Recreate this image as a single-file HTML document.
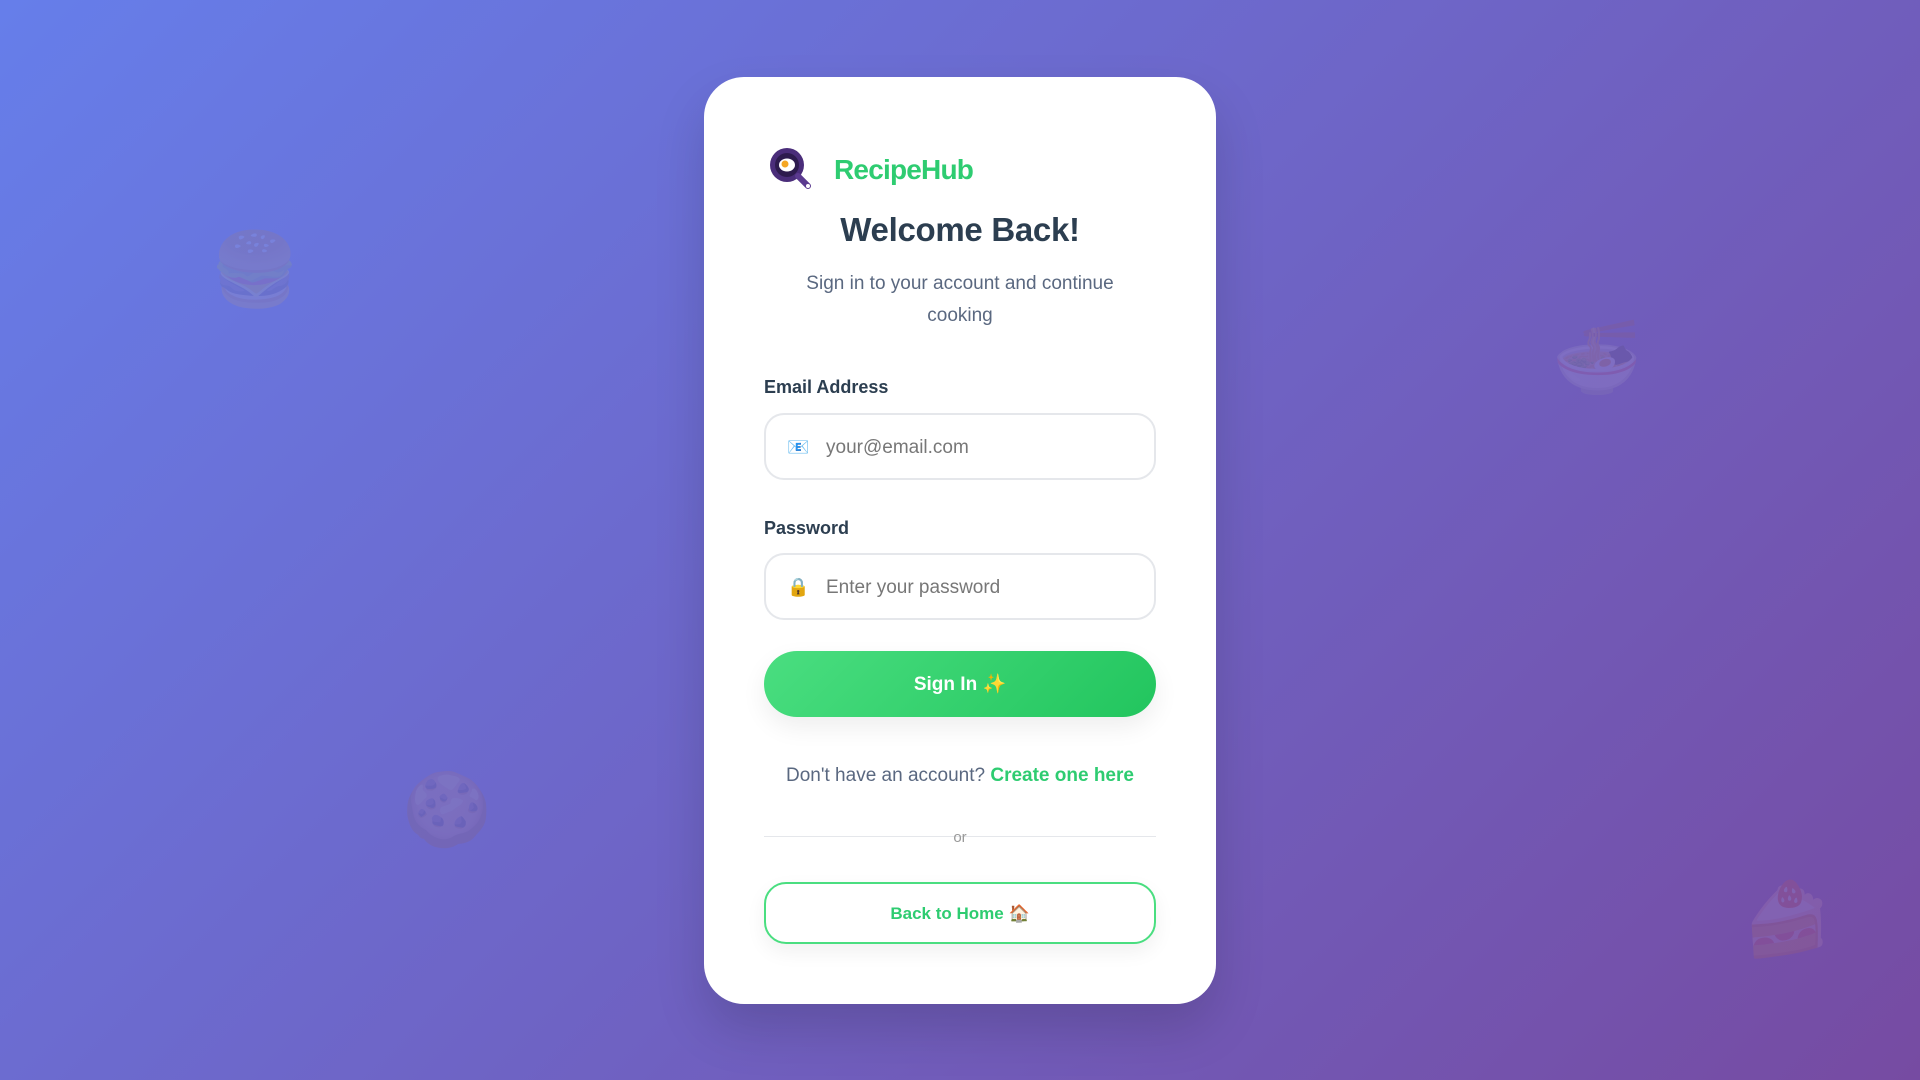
<!DOCTYPE html>
<html><head><meta charset="utf-8"><style>
*{box-sizing:border-box;margin:0;padding:0}
html,body{width:1920px;height:1080px;overflow:hidden}
body{background:linear-gradient(135deg,#667eea 0%,#764ba2 100%);font-family:"Liberation Sans","DejaVu Sans",sans-serif;position:relative}
.deco{position:absolute;font-size:72px;opacity:0.1;line-height:1;font-family:"Noto Color Emoji","DejaVu Sans",sans-serif}
.card{position:absolute;left:704px;top:77px;width:512px;height:927px;background:#fff;border-radius:40px;box-shadow:0 25px 50px rgba(0,0,0,.15)}
.logo{position:absolute;left:768px;top:146px;width:46px;height:46px}
.brand{position:absolute;left:834px;top:154px;font-size:28px;font-weight:bold;color:#2ecc71;letter-spacing:-0.8px}
h1{position:absolute;left:704px;width:512px;top:211px;text-align:center;font-size:33px;color:#2c3e50;font-weight:bold;letter-spacing:-0.3px}
.sub{position:absolute;left:780px;width:360px;top:268px;text-align:center;font-size:19px;line-height:32px;color:#5a6880}
.label{position:absolute;left:764px;font-size:18px;font-weight:bold;color:#2c3e50}
.input{position:absolute;left:764px;width:392px;height:67px;border:2px solid #e5e7eb;border-radius:20px;font-size:19px;color:#777;padding-left:60px;line-height:65px}
.input .ic{position:absolute;left:21px;top:0;font-size:18px}
.btn{position:absolute;left:764px;top:651px;width:392px;height:66px;border-radius:33px;background:linear-gradient(135deg,#4ade80,#22c55e);color:#fff;font-weight:bold;font-size:19px;text-align:center;line-height:68px;box-shadow:0 10px 25px rgba(0,0,0,.07)}
.acct{position:absolute;left:704px;width:512px;top:765px;text-align:center;font-size:19px;color:#5a6880}
.acct b{color:#2ecc71}
.line{position:absolute;left:764px;width:392px;top:836px;height:1px;background:#e5e7eb}
.or{position:absolute;left:944px;width:32px;top:829px;text-align:center;font-size:15px;color:#999}
.home{position:absolute;left:764px;top:882px;width:392px;height:62px;border:2px solid #4ade80;border-radius:22px;color:#2ecc71;font-weight:bold;font-size:17px;text-align:center;line-height:60px;box-shadow:0 8px 20px rgba(0,0,0,.06)}
</style></head><body>
<div class="deco" style="left:210px;top:234px">🍔</div>
<div class="deco" style="left:1552px;top:322px">🍜</div>
<div class="deco" style="left:402px;top:774px">🍪</div>
<div class="deco" style="left:1742px;top:884px">🍰</div>
<div class="card"></div>
<svg class="logo" viewBox="0 0 46 46"><circle cx="19" cy="19" r="17" fill="#4a2d7a"/><circle cx="19" cy="19" r="12" fill="#2d1b4e"/><line x1="30" y1="30" x2="40" y2="40" stroke="#5b3a8f" stroke-width="6" stroke-linecap="round"/><circle cx="40" cy="40" r="2" fill="#fff"/><ellipse cx="19" cy="19" rx="8" ry="6.5" fill="#fff"/><circle cx="17" cy="18" r="3.5" fill="#f5a623"/></svg>
<div class="brand">RecipeHub</div>
<h1>Welcome Back!</h1>
<div class="sub">Sign in to your account and continue cooking</div>
<div class="label" style="top:377px">Email Address</div>
<div class="input" style="top:413px"><span class="ic">📧</span>your@email.com</div>
<div class="label" style="top:518px">Password</div>
<div class="input" style="top:553px"><span class="ic">🔒</span>Enter your password</div>
<div class="btn">Sign In ✨</div>
<div class="acct">Don't have an account? <b>Create one here</b></div>
<div class="line"></div>
<div class="or">or</div>
<div class="home">Back to Home 🏠</div>
</body></html>
